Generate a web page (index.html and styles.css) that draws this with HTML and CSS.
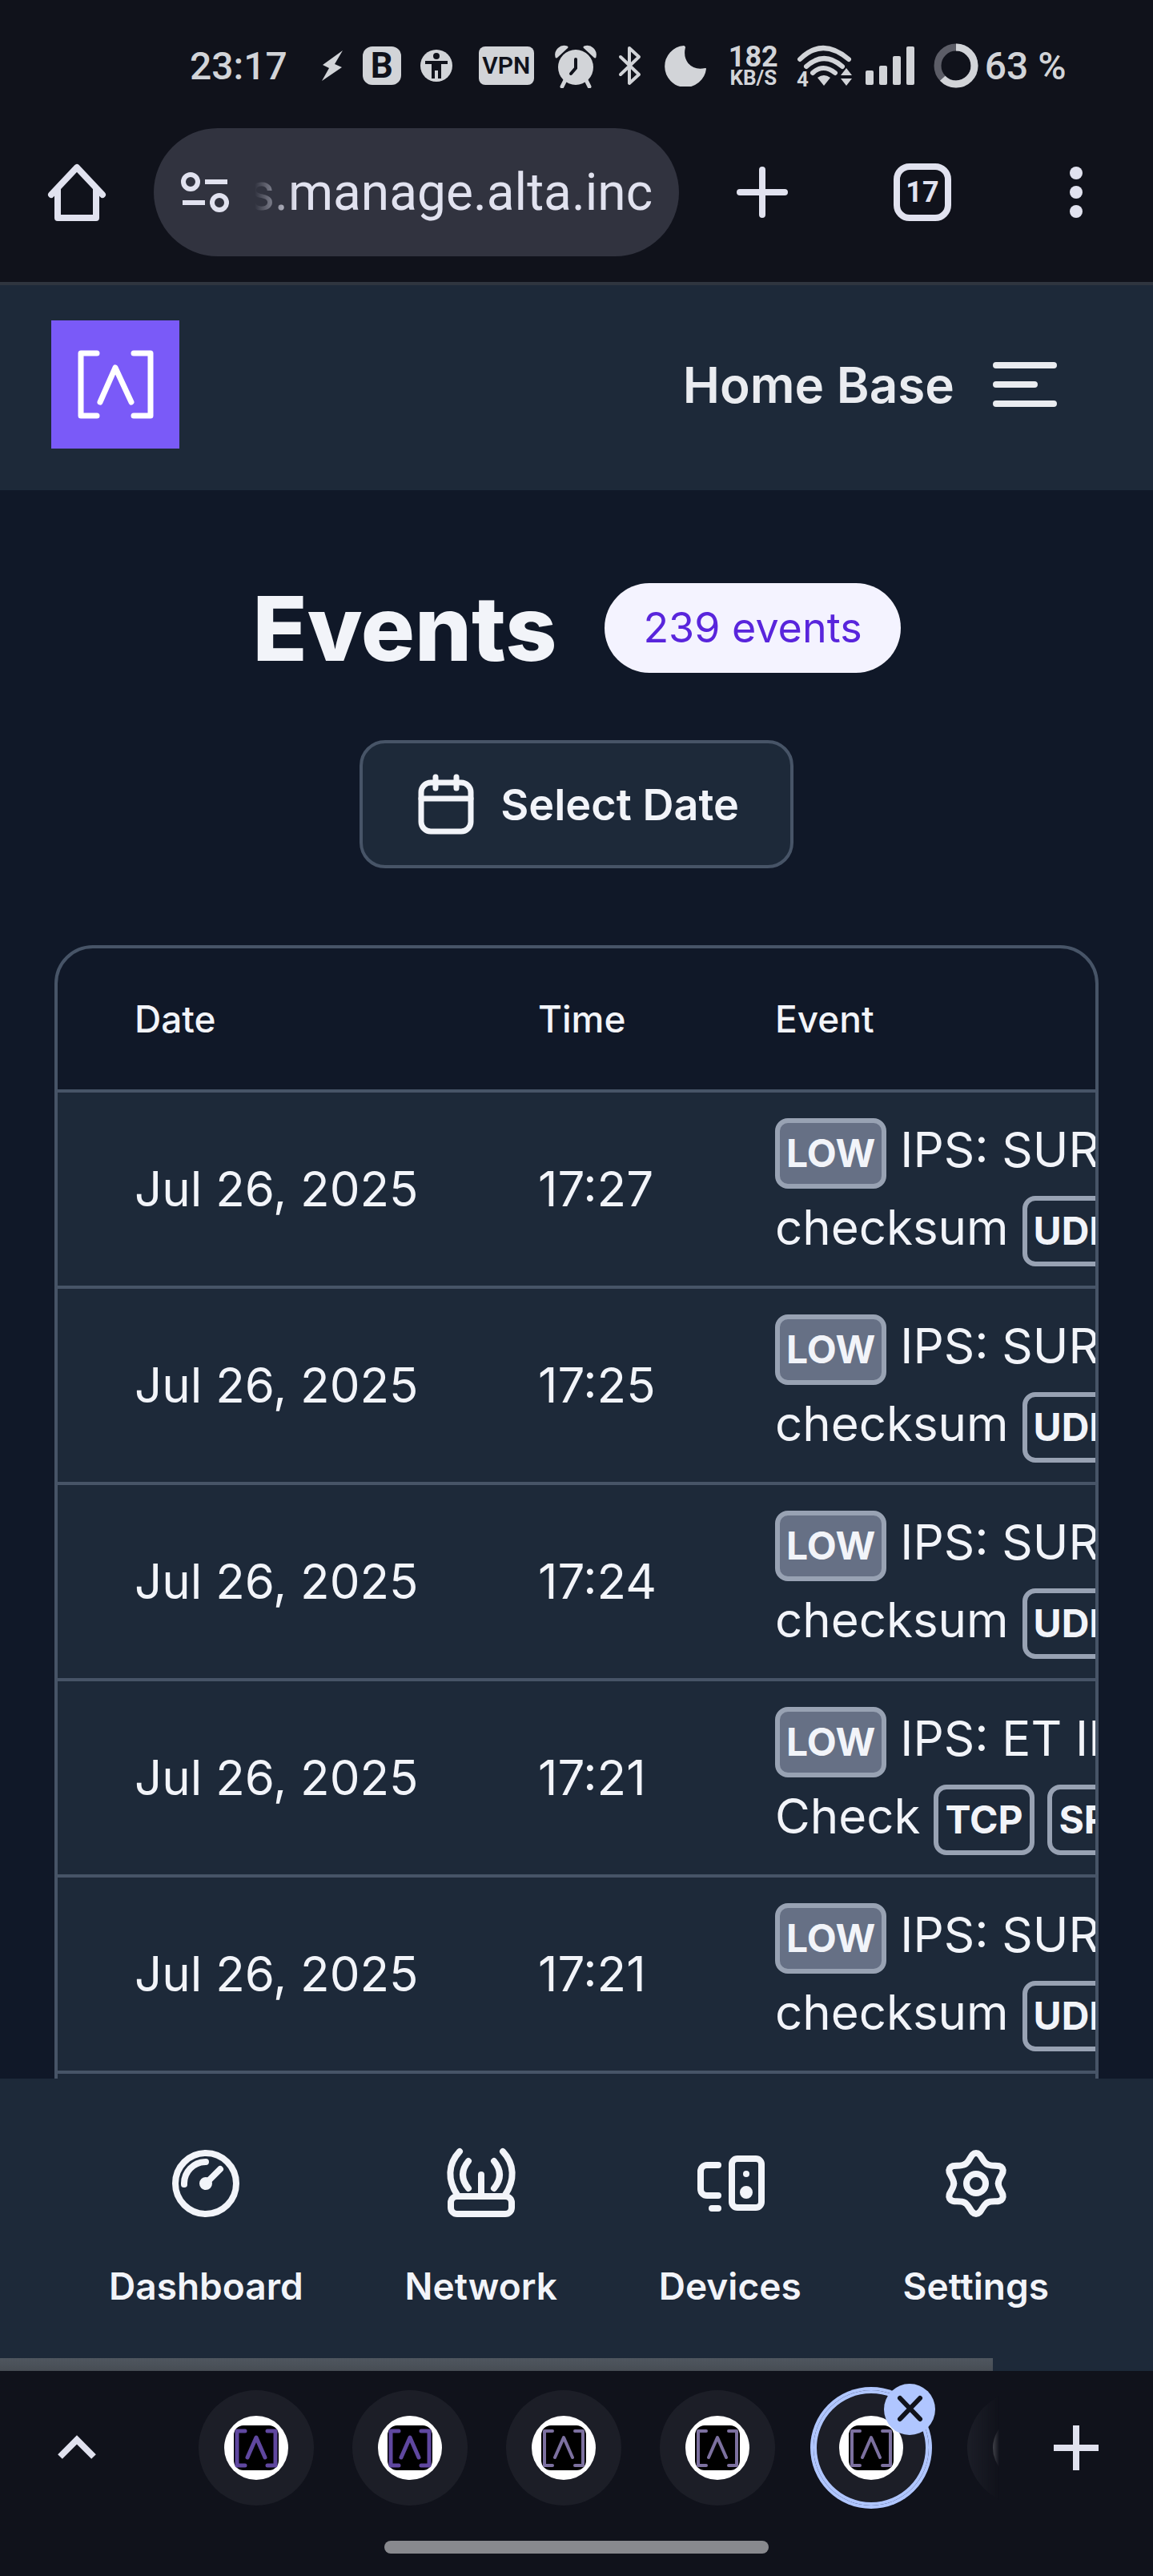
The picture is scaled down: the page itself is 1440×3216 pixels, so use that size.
FILE: index.html
```html
<!DOCTYPE html>
<html lang="en">
<head>
  <meta charset="UTF-8">
  <meta name="viewport" content="width=device-width, initial-scale=1.0">
  <title>Events</title>
  <link rel="stylesheet" href="styles.css">
</head>
<body>

<!-- phone status bar -->
<div class="status">
  <span class="clock">23:17</span>
  <div class="notices">
    <svg width="28" height="40" viewBox="0 0 28 40"><path d="M27 1L2 19l8 4L1 39l25-17-9-4z" fill="currentColor"/></svg>
    <span class="chip chip-b">B</span>
    <svg width="40" height="40" viewBox="0 0 40 40">
      <circle cx="20" cy="20" r="20" fill="currentColor"/>
      <g fill="#10121b"><circle cx="20" cy="8" r="4"/><path d="M6 14h28v4h-8v18h-4V26h-4v10h-4V18H6z"/></g>
    </svg>
  </div>
  <div class="system">
    <span class="chip chip-vpn">VPN</span>
    <svg width="56" height="56" viewBox="0 0 56 56" fill="currentColor">
      <path d="M4 17a10 10 0 0 1 13-12zM52 17A10 10 0 0 0 39 5z" stroke="currentColor" stroke-width="3" stroke-linejoin="round"/>
      <circle cx="28" cy="30" r="22"/>
      <path d="M15 46l-4 8M41 46l4 8" stroke="currentColor" stroke-width="5" stroke-linecap="round"/>
      <path d="M28 20v11l-6 7" fill="none" stroke="#10121b" stroke-width="4" stroke-linecap="round"/>
    </svg>
    <svg width="32" height="52" viewBox="0 0 32 52"><path d="M4 15l23 22-12 11V4l12 11L4 37" fill="none" stroke="currentColor" stroke-width="4" stroke-linejoin="round" stroke-linecap="round"/></svg>
    <svg width="60" height="52" viewBox="0 0 60 52"><path d="M27 2A25 25 0 1 0 54 30Q40 33 32 24Q25 15 28 3z" fill="currentColor" stroke="currentColor" stroke-width="2" stroke-linejoin="round"/></svg>
    <div class="speed"><b>182</b><small>KB/S</small></div>
    <div class="signal">
      <svg width="68" height="56" viewBox="0 0 68 56">
        <path d="M4 20q28-28 61 0M12 29q22-20 45 0M20 37q13-12 28 0" fill="none" stroke="currentColor" stroke-width="6" stroke-linecap="round"/>
        <path d="M26 43q8-6 16 0l-8 10zM55 40l7-9 7 9zM55 44l7 9 7-9z" fill="currentColor"/>
        <text x="0" y="54" class="wifi-gen">4</text>
      </svg>
      <svg width="61" height="48" viewBox="0 0 61 48" fill="currentColor">
        <rect y="30" width="10" height="18" rx="2"/><rect x="17" y="24" width="10" height="24" rx="2"/>
        <rect x="34" y="12" width="10" height="36" rx="2"/><rect x="51" width="10" height="48" rx="2"/>
      </svg>
    </div>
    <div class="battery">
      <svg width="56" height="56" viewBox="0 0 56 56" fill="none" stroke-width="9">
        <circle cx="28" cy="28" r="23" stroke="#5c5d67"/>
        <circle cx="28" cy="28" r="23" stroke="currentColor" pathLength="100" stroke-dasharray="63 37" transform="rotate(-90 28 28)"/>
      </svg>
      <span>63 %</span>
    </div>
  </div>
</div>

<!-- browser toolbar -->
<div class="toolbar">
  <button class="tool" aria-label="Home">
    <svg width="80" height="80" viewBox="0 0 80 80" class="line"><path d="M8 43L40 9l32 34M16 36v36h48V36"/></svg>
  </button>
  <div class="address">
    <svg width="60" height="52" viewBox="0 0 60 52" fill="none" stroke="currentColor" stroke-width="6">
      <circle cx="12" cy="13" r="9"/><path d="M30 13h28M2 39h28"/><circle cx="48" cy="39" r="9"/>
    </svg>
    <input type="text" value="s.manage.alta.inc" aria-label="Address">
  </div>
  <button class="tool tool-add" aria-label="New tab">
    <svg width="64" height="64" viewBox="0 0 64 64" class="line"><path d="M32 4v56M4 32h56"/></svg>
  </button>
  <button class="tool" aria-label="Open tabs"><span class="tab-count">17</span></button>
  <button class="tool" aria-label="More">
    <svg width="16" height="64" viewBox="0 0 16 64" fill="currentColor"><circle cx="8" cy="8" r="8"/><circle cx="8" cy="32" r="8"/><circle cx="8" cy="56" r="8"/></svg>
  </button>
</div>

<header class="header">
  <a href="#" class="logo" aria-label="Alta">
    <svg width="160" height="160" viewBox="0 0 160 160"><path d="M57 41H37v78h20M103 41h21v78h-21M61 102l19-43 20 43"/></svg>
  </a>
  <span class="site">Home Base</span>
  <button class="menu" aria-label="Menu">
    <svg width="80" height="56" viewBox="0 0 80 56" class="line"><path d="M4 4h72M4 28h48M4 52h72"/></svg>
  </button>
</header>

<main class="main">
  <div class="title">
    <h1>Events</h1>
    <span class="count">239 events</span>
  </div>
  <button class="date-btn">
    <svg width="80" height="80" viewBox="0 0 80 80"><rect x="9" y="13" width="62" height="61" rx="12"/><path d="M9 33h62M27 6v14M53 6v14"/></svg>
    Select Date
  </button>

  <div class="table-wrap">
    <table>
      <thead>
        <tr><th class="col-date">Date</th><th class="col-time">Time</th><th>Event</th></tr>
      </thead>
      <tbody>
        <tr>
          <td>Jul 26, 2025</td><td>17:27</td>
          <td><span class="tag low">LOW</span> IPS: SURICATA<br>checksum <span class="tag">UDP</span></td>
        </tr>
        <tr>
          <td>Jul 26, 2025</td><td>17:25</td>
          <td><span class="tag low">LOW</span> IPS: SURICATA<br>checksum <span class="tag">UDP</span></td>
        </tr>
        <tr>
          <td>Jul 26, 2025</td><td>17:24</td>
          <td><span class="tag low">LOW</span> IPS: SURICATA<br>checksum <span class="tag">UDP</span></td>
        </tr>
        <tr>
          <td>Jul 26, 2025</td><td>17:21</td>
          <td><span class="tag low">LOW</span> IPS: ET INFO<br>Check <span class="tag">TCP</span> <span class="tag">SRC</span></td>
        </tr>
        <tr>
          <td>Jul 26, 2025</td><td>17:21</td>
          <td><span class="tag low">LOW</span> IPS: SURICATA<br>checksum <span class="tag">UDP</span></td>
        </tr>
        <tr><td></td><td></td><td></td></tr>
      </tbody>
    </table>
  </div>
</main>

<nav class="nav">
  <a href="#">
    <svg width="96" height="96" viewBox="0 0 96 96" class="line">
      <circle cx="48" cy="48" r="38"/><path d="M21 49a27 27 0 0 1 27-28M48 48l18-18"/><circle cx="48" cy="48" r="4"/>
    </svg>
    Dashboard
  </a>
  <a href="#">
    <svg width="96" height="96" viewBox="0 0 96 96" class="line">
      <rect x="10" y="64" width="76" height="22" rx="8"/>
      <path d="M48 37v27M32 20q-14 17 0 34M64 20q14 17 0 34M21 8C6 24 6 44 18 62M75 8c15 16 15 36 3 54"/>
    </svg>
    Network
  </a>
  <a href="#">
    <svg width="96" height="96" viewBox="0 0 96 96" class="line">
      <rect x="50" y="17" width="37" height="61" rx="7"/>
      <path d="M33 25H19a8 8 0 0 0-8 8v22a8 8 0 0 0 8 8h14M25 79h8"/>
      <circle cx="68" cy="59" r="4"/><path d="M68 36h.01"/>
    </svg>
    Devices
  </a>
  <a href="#">
    <svg width="96" height="96" viewBox="0 0 96 96" class="line">
      <circle cx="48" cy="48" r="12"/>
      <path id="tooth" d="M34 24C41 20 41 10 48 10S55 20 62 24"/>
      <use href="#tooth" transform="rotate(60 48 48)"/><use href="#tooth" transform="rotate(120 48 48)"/>
      <use href="#tooth" transform="rotate(180 48 48)"/><use href="#tooth" transform="rotate(240 48 48)"/>
      <use href="#tooth" transform="rotate(300 48 48)"/>
    </svg>
    Settings
  </a>
</nav>
<div class="progress"><div class="progress-bar" style="width: 86.1%"></div></div>

<!-- browser tab strip -->
<div class="tabs">
  <button class="tool" aria-label="Show tabs">
    <svg width="64" height="64" viewBox="0 0 64 64" class="chevron"><path d="M11 43l21-21 21 21"/></svg>
  </button>
  <div class="strip">
    <div class="tab"><button aria-label="Tab 1"><svg viewBox="0 0 80 80"><use href="#fav"/></svg></button></div>
    <div class="tab"><button aria-label="Tab 2"><svg viewBox="0 0 80 80"><use href="#fav"/></svg></button></div>
    <div class="tab thin"><button aria-label="Tab 3"><svg viewBox="0 0 80 80"><use href="#fav"/></svg></button></div>
    <div class="tab thin"><button aria-label="Tab 4"><svg viewBox="0 0 80 80"><use href="#fav"/></svg></button></div>
    <div class="tab thin active">
      <button aria-label="Tab 5"><svg viewBox="0 0 80 80"><use href="#fav"/></svg></button>
      <button class="close" aria-label="Close tab"><svg width="64" height="64" viewBox="0 0 64 64"><path d="M20 18l25 26M45 18L20 44"/></svg></button>
    </div>
    <div class="tab thin"><button aria-label="Tab 6"><svg viewBox="0 0 80 80"><use href="#fav"/></svg></button></div>
  </div>
  <button class="tool" aria-label="Add tab">
    <svg width="64" height="64" viewBox="0 0 64 64" class="plus"><path d="M32 4v56M4 32h56"/></svg>
  </button>
</div>
<div class="gesture"></div>

<svg width="0" height="0" class="defs">
  <defs>
    <g id="fav">
      <circle cx="40" cy="40" r="40" fill="#fff" stroke="none"/>
      <rect x="12" y="12" width="56" height="56" rx="12" fill="#000" stroke="none"/>
      <path d="M26 19H16v43h10M54 19h10v43H54M29 52l11-25 11 25"/>
    </g>
  </defs>
</svg>

</body>
</html>
```
FILE: styles.css
```css
* {
  box-sizing: border-box;
}
body {
  margin: 0;
  height: 100vh;
  display: flex;
  flex-direction: column;
  overflow: hidden;
  background: #101828;
  color: #f2f4f9;
  font-family: Inter, "Liberation Sans", sans-serif;
}
button {
  border: 0;
  padding: 0;
  background: none;
  color: inherit;
  font-family: inherit;
}
svg {
  display: block;
  flex: none;
}
.line {
  fill: none;
  stroke: currentColor;
  stroke-width: 8px;
  stroke-linecap: round;
  stroke-linejoin: round;
}

/* status bar */
.status {
  flex: none;
  height: 160px;
  padding: 4px 0 0 237px;
  display: flex;
  align-items: center;
  background: #10121b;
  color: #d2d4d8;
  font: 500 48px Roboto, sans-serif;
  white-space: nowrap;
}
.notices {
  display: flex;
  align-items: center;
  gap: 24px;
  margin: 0 33px 0 42px;
}
.chip {
  height: 48px;
  background: #d2d4d8;
  color: #10121b;
  text-align: center;
  line-height: 48px;
}
.chip-b {
  width: 48px;
  border-radius: 12px;
  font-size: 44px;
  font-weight: 700;
}
.chip-vpn {
  width: 69px;
  border-radius: 8px;
  font-size: 30px;
  font-weight: 600;
}
.system {
  display: flex;
  align-items: center;
  gap: 24px;
}
.speed {
  display: flex;
  flex-direction: column;
  align-items: center;
  width: 60px;
}
.speed b {
  font-size: 36px;
  line-height: 30px;
}
.speed small {
  font-size: 26px;
  font-weight: 700;
  line-height: 22px;
}
.signal {
  display: flex;
  align-items: center;
  gap: 18px;
}
.signal svg {
  overflow: visible;
}
.wifi-gen {
  fill: currentColor;
  font-size: 26px;
  font-weight: 700;
}
.battery {
  display: flex;
  align-items: center;
  gap: 8px;
}

/* browser toolbar */
.toolbar {
  flex: none;
  display: flex;
  height: 192px;
  padding-bottom: 32px;
  background: #10121b;
  color: #e1e2ef;
  font-family: Roboto, sans-serif;
}
.tool {
  width: 192px;
  flex: none;
  display: flex;
  align-items: center;
  justify-content: center;
}
.tool-add {
  width: 208px;
}
.address {
  flex: 1;
  min-width: 0;
  display: flex;
  align-items: center;
  gap: 24px;
  padding: 0 24px 0 34px;
  border-radius: 80px;
  background: #31333f;
}
.address input {
  flex: 1;
  min-width: 0;
  padding: 0;
  border: 0;
  background: none;
  color: inherit;
  font: 400 64px Roboto, sans-serif;
  -webkit-mask-image: linear-gradient(to right, transparent 8px, #000 60px);
  mask-image: linear-gradient(to right, transparent 8px, #000 60px);
}
.tab-count {
  width: 72px;
  height: 72px;
  border: 8px solid currentColor;
  border-radius: 20px;
  font-size: 36px;
  font-weight: 700;
  line-height: 56px;
}

/* page header */
.header {
  flex: none;
  display: flex;
  align-items: center;
  padding: 44px 120px 52px 64px;
  border-top: 4px solid #2f353f;
  background: #1d2939;
  color: #eaecf0;
}
.logo {
  background: #7a5af8;
}
.logo path {
  fill: none;
  stroke: #fff;
  stroke-width: 7px;
  stroke-linecap: round;
  stroke-linejoin: round;
}
.site {
  margin-left: auto;
  margin-right: 48px;
  font-size: 62px;
  font-weight: 600;
}

.main {
  flex: 1;
  min-height: 0;
  overflow: hidden;
  padding: 116px 68px 0;
  display: flex;
  flex-direction: column;
  align-items: center;
}
.title {
  display: flex;
  align-items: center;
  gap: 60px;
}
h1 {
  margin: 0;
  font-size: 112px;
  line-height: 112px;
  font-weight: 800;
}
.count {
  padding: 0 48px;
  border-radius: 56px;
  background: #f4f3ff;
  color: #5925dc;
  font-size: 52px;
  line-height: 112px;
}
.date-btn {
  flex: none;
  display: flex;
  align-items: center;
  gap: 28px;
  height: 160px;
  margin: 84px 0 96px;
  padding: 0 64px;
  border: 4px solid #475467;
  border-radius: 32px;
  background: #1d2939;
  font-size: 54px;
  font-weight: 600;
}
.date-btn svg {
  fill: none;
  stroke: currentColor;
  stroke-width: 7px;
  stroke-linecap: round;
}

/* events table */
.table-wrap {
  flex: none;
  width: 100%;
  overflow: hidden;
  border: 4px solid #475467;
  border-radius: 48px;
}
table {
  border-spacing: 0;
  white-space: nowrap;
}
th, td {
  padding: 0;
  border-bottom: 4px solid #475467;
  text-align: left;
}
th:first-child, td:first-child {
  padding-left: 96px;
}
th {
  height: 180px;
  font-size: 46px;
  font-weight: 500;
}
td {
  height: 245px;
  padding: 21px 96px 22px 0;
  background: #1d2939;
  font-size: 60px;
  font-weight: 400;
  line-height: 96px;
}
.col-date {
  min-width: 600px;
}
.col-time {
  min-width: 296px;
}
.tag {
  display: inline-block;
  padding: 0 8px;
  border: 6px solid #98a2b3;
  border-radius: 16px;
  font-size: 48px;
  font-weight: 700;
  line-height: 76px;
}
.low {
  background: #667085;
}

/* bottom navigation */
.nav {
  flex: none;
  display: flex;
  justify-content: space-between;
  padding: 83px 130px 60px 136px;
  background: #1d2939;
}
.nav a {
  display: flex;
  flex-direction: column;
  align-items: center;
  gap: 50px;
  color: inherit;
  font-size: 46px;
  font-weight: 600;
  line-height: 60px;
  text-decoration: none;
}
.progress {
  flex: none;
  height: 16px;
  background: #1d2939;
}
.progress-bar {
  height: 100%;
  background: linear-gradient(#4f565f, #474d54);
}

/* tab strip */
.tabs {
  flex: none;
  display: flex;
  height: 192px;
  background: #10121b;
  color: #e1e2ef;
}
.strip {
  flex: 1;
  min-width: 0;
  display: flex;
  align-items: center;
  gap: 48px;
  padding-left: 56px;
  overflow: hidden;
  -webkit-mask-image: linear-gradient(to left, transparent, #000 40px);
  mask-image: linear-gradient(to left, transparent, #000 40px);
}
.tab {
  position: relative;
  flex: none;
}
.tab button {
  display: flex;
  align-items: center;
  justify-content: center;
  width: 144px;
  height: 144px;
  border-radius: 50%;
  background: #1c1e27;
}
.tab svg {
  width: 80px;
  height: 80px;
  fill: none;
  stroke: #5f479f;
  stroke-width: 5px;
  stroke-linecap: round;
  stroke-linejoin: round;
}
.thin svg {
  stroke: #7c709f;
  stroke-width: 4px;
}
.active button {
  box-shadow: 0 0 0 4px #b0c6ff, inset 0 0 0 4px #b0c6ff;
}
.tab .close {
  position: absolute;
  top: -8px;
  right: -8px;
  width: 64px;
  height: 64px;
  background: #b0c6ff;
  box-shadow: none;
}
.close svg {
  width: 64px;
  height: 64px;
  stroke: #10121b;
  stroke-width: 6px;
}
.chevron, .plus {
  fill: none;
  stroke: currentColor;
  stroke-width: 8px;
}
.gesture {
  flex: none;
  height: 64px;
  padding-top: 20px;
  background: #10121b;
}
.gesture::before {
  content: "";
  display: block;
  width: 480px;
  height: 16px;
  margin: 0 auto;
  border-radius: 8px;
  background: #88898e;
}
.defs {
  position: absolute;
}
```
